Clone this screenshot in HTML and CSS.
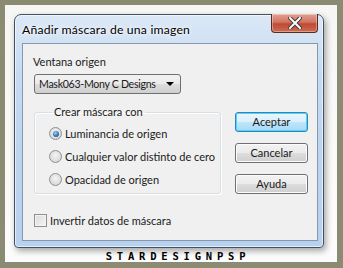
FILE: index.html
```html
<!DOCTYPE html>
<html lang="es">
<head>
<meta charset="utf-8">
<title>Añadir máscara de una imagen</title>
<link rel="stylesheet" href="styles.css">
</head>
<body>
<div class="frame">
  <div class="window">
    <div class="titlebar">
      <span class="title">Añadir máscara de una imagen</span>
      <div class="close">
        <svg width="14" height="12" viewBox="0 0 14 12">
          <path d="M2 1 L12 11 M12 1 L2 11" stroke="#3a3a3a" stroke-width="4" stroke-linecap="square"/>
          <path d="M2 1 L12 11 M12 1 L2 11" stroke="#ffffff" stroke-width="2" stroke-linecap="square"/>
        </svg>
      </div>
    </div>
    <div class="client">
      <div class="top">
        <div class="left">
          <div class="label">Ventana origen</div>
          <div class="select">
            <span class="select-text">Mask063-Mony C Designs</span>
            <span class="arrow"></span>
          </div>
          <fieldset class="group">
            <legend>Crear máscara con</legend>
            <div class="radio-row"><span class="radio checked"></span><span>Luminancia de origen</span></div>
            <div class="radio-row"><span class="radio"></span><span>Cualquier valor distinto de cero</span></div>
            <div class="radio-row"><span class="radio"></span><span>Opacidad de origen</span></div>
          </fieldset>
        </div>
        <div class="buttons">
          <div class="btn default">Aceptar</div>
          <div class="btn">Cancelar</div>
          <div class="btn">Ayuda</div>
        </div>
      </div>
      <div class="check-row"><span class="check"></span><span>Invertir datos de máscara</span></div>
    </div>
  </div>
  <div class="watermark">STARDESIGNPSP</div>
</div>
</body>
</html>
```

FILE: styles.css
```css
* { box-sizing: border-box; }
html, body { margin: 0; padding: 0; }
body {
  width: 343px;
  height: 268px;
  background: #8b8b73;
  padding: 5px 6px 6px 5px;
  font-family: "Lato", "Noto Sans", sans-serif;
  font-size: 11px;
  color: #1a1a1a;
  overflow: hidden;
  white-space: nowrap;
}
.frame {
  width: 332px;
  height: 257px;
  background: linear-gradient(180deg, #f6f6f4 0%, #fcfcfc 100%);
  padding: 9px 0 0 9px;
  display: flex;
  flex-direction: column;
}
.window {
  width: 310px;
  height: 234px;
  border: 1px solid #3f5266;
  border-radius: 7px 7px 4px 4px;
  background: linear-gradient(180deg, #dbe8f6 0%, #c6dbf1 25%, #bdd4ee 60%, #b8d1ec 100%);
  box-shadow: 2px 3px 6px rgba(0,0,0,0.35), inset 0 0 0 1px rgba(255,255,255,0.6);
  display: flex;
  flex-direction: column;
}
.titlebar {
  height: 28px;
  display: flex;
  justify-content: space-between;
  align-items: flex-start;
}
.title {
  font-family: "Lato", sans-serif;
  font-size: 12.2px;
  padding: 7px 0 0 7px;
  letter-spacing: 0.2px;
  color: #000;
  text-shadow: 0 0 6px #ffffff, 0 0 3px #ffffff;
}
.close {
  width: 47px;
  height: 19px;
  margin-right: 5px;
  margin-top: -1px;
  border: 1px solid #5a2a22;
  border-top: none;
  border-radius: 0 0 4px 4px;
  background: linear-gradient(180deg, #e2a193 0%, #d27562 45%, #bf4a33 55%, #cc6c53 100%);
  box-shadow: inset 0 0 0 1px rgba(255,255,255,0.35);
  display: flex;
  align-items: center;
  justify-content: center;
}
.client {
  flex: 1;
  margin: 0 5px 6px 7px;
  border: 1px solid #8399b1;
  background: #f0f0f0;
  padding: 10px 0 0 11px;
  display: flex;
  flex-direction: column;
}
.top { display: flex; }
.left { width: 187px; }
.label { height: 16px; line-height: 16px; margin-left: -1px; }
.select {
  margin-top: 4px;
  width: 147px;
  height: 20px;
  border: 1px solid #707070;
  border-radius: 3px;
  background: linear-gradient(180deg, #f2f2f2 0%, #ebebeb 50%, #dddddd 51%, #cfcfcf 100%);
  display: flex;
  align-items: center;
  justify-content: space-between;
  padding: 0 6px 0 4px;
  line-height: 18px;
}
.select-text {
  font-size: 10.6px;
  letter-spacing: -0.3px;
}
.arrow {
  width: 0; height: 0;
  border-left: 4px solid transparent;
  border-right: 4px solid transparent;
  border-top: 4px solid #000;
}
.group {
  margin: 11px 0 0 0;
  width: 187px;
  height: 89px;
  border: 1px solid #d5dfe5;
  border-radius: 3px;
  box-shadow: inset 1px 1px 0 #ffffff, 1px 1px 0 #ffffff;
  padding: 3px 0 0 14px;
}
.group legend {
  padding: 0 2px;
  margin-left: 3px;
  line-height: 14px;
}
.radio-row {
  display: flex;
  align-items: center;
  height: 23px;
  gap: 3px;
}
.radio {
  width: 13px; height: 13px;
  border-radius: 50%;
  border: 1px solid #8e8f8f;
  background: radial-gradient(circle at 50% 40%, #f4f4f4 0%, #dadada 70%, #cfcfcf 100%);
  display: flex; align-items: center; justify-content: center;
}
.radio.checked::after {
  content: "";
  width: 6px; height: 6px;
  border-radius: 50%;
  background: radial-gradient(circle at 40% 35%, #9fd0f3 0%, #2b6ea8 60%, #153e67 100%);
}
.buttons {
  margin-left: 14px;
  margin-top: 58px;
  display: flex;
  flex-direction: column;
  gap: 11px;
}
.btn {
  width: 73px;
  height: 20px;
  border: 1px solid #707070;
  border-radius: 3px;
  background: linear-gradient(180deg, #f2f2f2 0%, #ebebeb 50%, #dddddd 51%, #cfcfcf 100%);
  box-shadow: inset 0 0 0 1px #fcfcfc;
  display: flex;
  align-items: center;
  justify-content: center;
  line-height: 18px;
}
.btn.default {
  border-color: #3c7fb1;
  background: linear-gradient(180deg, #eaf6fd 0%, #d9f0fc 50%, #bee6fd 51%, #a7d9f5 100%);
  box-shadow: inset 0 0 0 1px #48d8fb;
}
.check-row {
  margin-top: 20px;
  display: flex;
  align-items: center;
  gap: 3px;
}
.check {
  width: 13px; height: 13px;
  border: 1px solid #8e8f8f;
  background: linear-gradient(135deg, #dcdcdc 0%, #f4f4f4 100%);
  box-shadow: inset 0 0 0 1px #f4f4f4;
}
.watermark {
  margin-top: 3px;
  text-align: center;
  font-family: "DejaVu Sans Mono", monospace;
  font-weight: bold;
  font-size: 10.5px;
  letter-spacing: 4.8px;
  padding-left: 5px;
  line-height: 10px;
  color: #000;
}
```
